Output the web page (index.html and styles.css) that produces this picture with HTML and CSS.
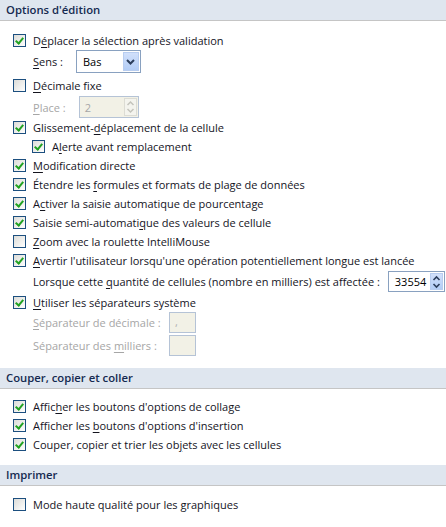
FILE: index.html
```html
<!DOCTYPE html>
<html lang="fr">
<head>
<meta charset="utf-8">
<link rel="stylesheet" href="styles.css">
</head>
<body>
<div class="panel">
  <div class="hdr">Options d'édition</div>
  <div class="sec sec1">
    <div class="row"><span class="cb on"></span><span>D<u>é</u>placer la sélection après validation</span></div>
    <div class="row sub r-sens">
      <span class="lbl"><u>S</u>ens :</span>
      <span class="combo"><span class="combo-val">Bas</span><span class="combo-btn"><svg width="9" height="6" viewBox="0 0 9 6"><path d="M1 1 L4.5 4.5 L8 1" fill="none" stroke="#2c3e5c" stroke-width="2"/></svg></span></span>
    </div>
    <div class="row r-dec"><span class="cb"></span><span><u>D</u>écimale fixe</span></div>
    <div class="row sub r-place">
      <span class="lbl dis"><u>P</u>lace :</span>
      <span class="spin dis-box"><span class="spin-val">2</span><span class="spin-btn dis-btn"><svg width="9" height="14" viewBox="0 0 9 14"><path d="M1.5 5 L4.5 2 L7.5 5" fill="none" stroke="#c4c4bc" stroke-width="1.5"/><path d="M1.5 9 L4.5 12 L7.5 9" fill="none" stroke="#c4c4bc" stroke-width="1.5"/></svg></span></span>
    </div>
    <div class="row"><span class="cb on"></span><span>Glissement-<u>d</u>éplacement de la cellule</span></div>
    <div class="row indent"><span class="cb on"></span><span>A<u>l</u>erte avant remplacement</span></div>
    <div class="row"><span class="cb on"></span><span><u>M</u>odification directe</span></div>
    <div class="row"><span class="cb on"></span><span>Étendre les <u>f</u>ormules et formats de plage de données</span></div>
    <div class="row"><span class="cb on"></span><span>A<u>c</u>tiver la saisie automatique de pourcentage</span></div>
    <div class="row"><span class="cb on"></span><span>Saisie semi-automati<u>q</u>ue des valeurs de cellule</span></div>
    <div class="row"><span class="cb"></span><span><u>Z</u>oom avec la roulette IntelliMouse</span></div>
    <div class="row"><span class="cb on"></span><span><u>A</u>vertir l'utilisateur lorsqu'une opération potentiellement longue est lancée</span></div>
    <div class="row sub r-qty">
      <span class="lbl">Lorsque cette <u>q</u>uantité de cellules (nombre en milliers) est affectée :</span>
      <span class="spin spin2"><span class="spin-val">33554</span><span class="spin-btn"><svg width="9" height="14" viewBox="0 0 9 14"><path d="M1.5 5 L4.5 2 L7.5 5" fill="none" stroke="#2c3e5c" stroke-width="1.6"/><path d="M1.5 9 L4.5 12 L7.5 9" fill="none" stroke="#2c3e5c" stroke-width="1.6"/></svg></span></span>
    </div>
    <div class="row"><span class="cb on"></span><span><u>U</u>tiliser les séparateurs système</span></div>
    <div class="row sub sep">
      <span class="lbl dis seplbl"><u>S</u>éparateur de décimale :</span>
      <span class="box dis-box"><span class="comma">,</span></span>
    </div>
    <div class="row sub sep sep2">
      <span class="lbl dis seplbl">Séparateur des <u>m</u>illiers :</span>
      <span class="box dis-box"></span>
    </div>
  </div>
  <div class="hdr">Couper, copier et coller</div>
  <div class="sec sec2">
    <div class="row"><span class="cb on"></span><span>Affic<u>h</u>er les boutons d'options de collage</span></div>
    <div class="row"><span class="cb on"></span><span>Afficher les <u>b</u>outons d'options d'insertion</span></div>
    <div class="row"><span class="cb on"></span><span>Couper, copier et trier les ob<u>j</u>ets avec les cellules</span></div>
  </div>
  <div class="hdr">Imprimer</div>
  <div class="sec sec3">
    <div class="row"><span class="cb"></span><span>Mode haute qualité pour les graphiques</span></div>
  </div>
</div>
</body>
</html>
```

FILE: styles.css
```css
html, body {
  margin: 0;
  padding: 0;
  background: #fff;
}
body {
  font-family: "Open Sans", "Noto Sans", "DejaVu Sans", sans-serif;
  font-size: 11px;
  color: #14141e;
  width: 446px;
  height: 527px;
  overflow: hidden;
}
u {
  text-decoration: underline;
  text-underline-offset: 2px;
}
.hdr {
  height: 20px;
  line-height: 20px;
  background: #dfe6ef;
  border-bottom: 1px solid #c5c5c5;
  padding-left: 6px;
  font-weight: 600;
  font-size: 11.3px;
  color: #152a50;
}
.sec {
  display: flex;
  flex-direction: column;
}
.sec1 { padding: 10px 0 12px; }
.sec2 { padding: 8px 0 11px; }
.sec3 { padding: 9px 0 0; }
.row {
  display: flex;
  align-items: center;
  height: 19px;
  padding-left: 13px;
  white-space: nowrap;
}
.row .cb { margin-right: 7px; }
.row.indent { padding-left: 32px; }
.row.sub { padding-left: 33px; }
.r-sens { height: 23px; }
.r-dec { margin-top: 3px; }
.r-place { height: 22px; margin-top: 1px; }
.r-qty { height: 23px; }
.row.sep { height: 21px; }
.row.sep2 { margin-top: 2px; }
.cb {
  flex: none;
  width: 13px;
  height: 13px;
  box-sizing: border-box;
  border: 1px solid #1c4f7f;
  background: linear-gradient(135deg, #dcdcd8 0%, #f4f4f2 70%, #ffffff 100%);
  position: relative;
}
.cb.on::after {
  content: "";
  position: absolute;
  left: 3px;
  top: 1px;
  width: 3px;
  height: 6px;
  border: solid #21a221;
  border-width: 0 2px 2px 0;
  transform: rotate(40deg);
}
.lbl { flex: none; }
.dis { color: #a6a6a6; }
.combo {
  margin-left: 13px;
  width: 65px;
  height: 23px;
  box-sizing: border-box;
  border: 1px solid #89a1c0;
  background: #fff;
  display: flex;
  align-items: center;
  justify-content: space-between;
  padding: 1px;
}
.combo-val { padding-left: 5px; color: #000; }
.combo-btn {
  width: 16px;
  height: 19px;
  background: linear-gradient(#d1e0fb, #b3cdf6);
  border: 1px solid #b8cdf0;
  box-sizing: border-box;
  display: flex;
  align-items: center;
  justify-content: center;
}
.spin {
  margin-left: 13px;
  width: 60px;
  height: 22px;
  box-sizing: border-box;
  border: 1px solid #89a1c0;
  background: #fff;
  display: flex;
  align-items: center;
  justify-content: space-between;
  padding: 1px;
}
.spin-val { padding-left: 4px; }
.dis-box {
  background: #f2f1e6;
  border-color: #b5c3d6;
  color: #a6a6a6;
}
.spin-btn {
  width: 13px;
  height: 18px;
  background: linear-gradient(#d1e0fb, #b3cdf6);
  border: 1px solid #b8cdf0;
  box-sizing: border-box;
  display: flex;
  align-items: center;
  justify-content: center;
}
.spin-btn.dis-btn {
  background: #f4f4ee;
  border-color: #dcdcd4;
}
.spin2 {
  margin-left: 8px;
  width: 57px;
  height: 21px;
}
.spin2 .spin-btn { height: 17px; }
.spin2 .spin-val { color: #000; padding-left: 5px; }
.seplbl { width: 136px; }
.box {
  width: 27px;
  height: 21px;
  box-sizing: border-box;
  border: 1px solid #b5c3d6;
  position: relative;
}
.comma {
  position: absolute;
  left: 5px;
  top: 1px;
  color: #b0b0b0;
}
```
